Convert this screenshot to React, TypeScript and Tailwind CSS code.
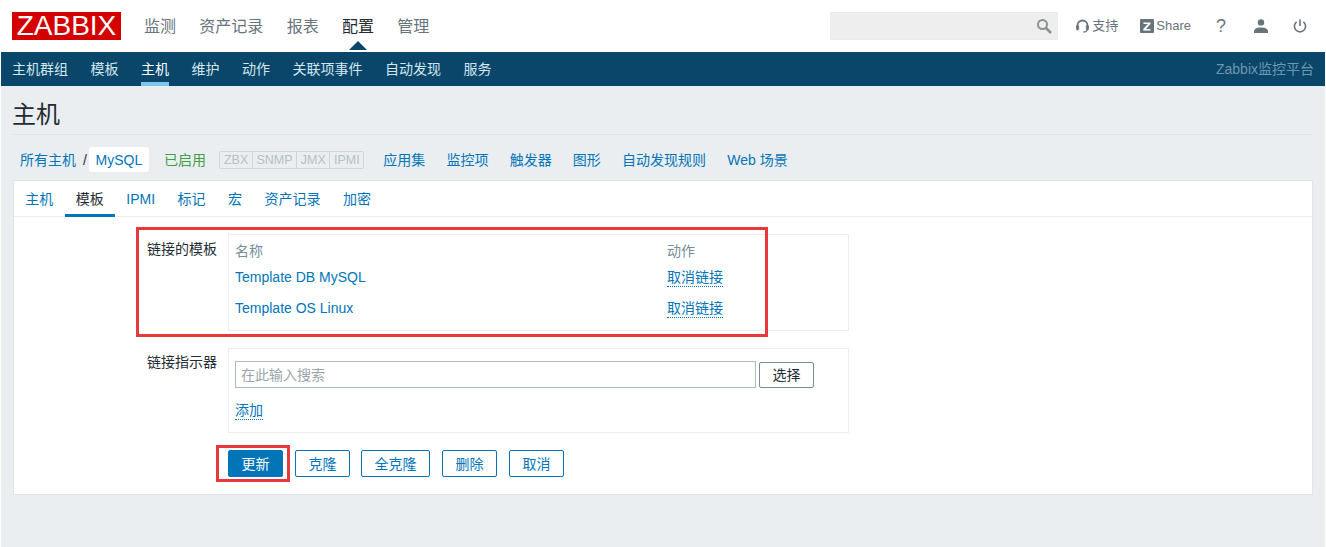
const NAV_MAIN = ["监测", "资产记录", "报表", "配置", "管理"];
const NAV_SUB = ["主机群组", "模板", "主机", "维护", "动作", "关联项事件", "自动发现", "服务"];
const HOST_LINKS = ["应用集", "监控项", "触发器", "图形", "自动发现规则", "Web 场景"];
const TABS = ["主机", "模板", "IPMI", "标记", "宏", "资产记录", "加密"];
const STATUS = ["ZBX", "SNMP", "JMX", "IPMI"];
const TEMPLATES = ["Template DB MySQL", "Template OS Linux"];

function SearchIcon() {
  return (
    <svg width="16" height="16" viewBox="0 0 16 16" fill="none" stroke="#8a9094" strokeWidth="2">
      <circle cx="6.5" cy="6.5" r="4.5" />
      <path d="M10 10l5 5" strokeWidth="2.6" />
    </svg>
  );
}

function HeadsetIcon() {
  return (
    <svg width="13" height="14" viewBox="0 0 13 14" fill="none" stroke="#68747b" strokeWidth="1.8">
      <path d="M1.5 9V6.5a5 5 0 0 1 10 0V9" />
      <rect x="0.3" y="6.5" width="2.4" height="4.5" rx="1" fill="#68747b" strokeWidth="0.6" />
      <rect x="10.3" y="6.5" width="2.4" height="4.5" rx="1" fill="#68747b" strokeWidth="0.6" />
      <path d="M11 10.5c0 1.5-1.5 2.5-3.5 2.5" strokeWidth="1.3" />
    </svg>
  );
}

function ShareIcon() {
  return (
    <svg width="14" height="14" viewBox="0 0 14 14">
      <rect width="14" height="14" rx="1" fill="#68747b" />
      <path d="M3.5 3.5h7v1.6l-4.6 5h4.6v1.4h-7.2v-1.6l4.6-5H3.5z" fill="#fff" />
    </svg>
  );
}

function UserIcon() {
  return (
    <svg width="16" height="14" viewBox="0 0 16 14" fill="#68747b">
      <circle cx="8" cy="3.4" r="3.2" />
      <path d="M1 14v-1.5C1 10 4 8.6 8 8.6s7 1.4 7 3.9V14z" />
    </svg>
  );
}

function PowerIcon() {
  return (
    <svg width="14" height="14" viewBox="0 0 14 14" fill="none" stroke="#68747b" strokeWidth="1.6">
      <path d="M7 0.5v6.5" />
      <path d="M3.6 2.8a5.6 5.6 0 1 0 6.8 0" />
    </svg>
  );
}

function FormButton({ label, primary, wide, gap }: { label: string; primary?: boolean; wide?: boolean; gap?: string }) {
  return (
    <button
      type="button"
      className={`h-[27px] rounded-[2px] border border-[#0275b8] text-sm ${wide ? "w-[69px]" : "w-[55px]"} ${
        primary ? "bg-[#0275b8] text-white" : "bg-white text-[#0275b8]"
      } ${gap ?? ""}`}
    >
      {label}
    </button>
  );
}

export default function App() {
  return (
    <div className="min-h-[547px] bg-white px-px font-['Liberation_Sans','Noto_Sans_CJK_SC',sans-serif] text-sm text-[#1f2c33]">
      <header className="flex h-[52px] items-start pl-[11px] pr-[18px] pt-3">
        <div className="flex h-[28px] w-[109px] items-center justify-center bg-[#d40000] text-[28px] leading-none text-white">
          ZABBIX
        </div>
        <nav className="ml-[23px] flex gap-[23.3px] pt-[3px] text-base leading-6 text-[#68747b]">
          {NAV_MAIN.map((item) => (
            <a key={item} className={item === "配置" ? "relative text-[#1f2c33]" : ""}>
              {item}
              {item === "配置" && (
                <span className="absolute left-[7px] top-[26px] h-0 w-0 border-x-[9px] border-b-[9px] border-x-transparent border-b-[#0a466a]" />
              )}
            </a>
          ))}
        </nav>
        <div className="ml-auto flex items-center">
          <div className="flex h-[28px] w-[228px] items-center justify-end border border-[#ebebeb] bg-[#eeeeee] pr-[5px]">
            <SearchIcon />
          </div>
          <a className="ml-[18px] flex items-center gap-[3px] text-[13px] text-[#68747b]">
            <HeadsetIcon />
            <span>支持</span>
          </a>
          <a className="ml-[22px] flex items-center gap-[2px] text-[13px] text-[#68747b]">
            <ShareIcon />
            <span>Share</span>
          </a>
          <span className="ml-[25px] text-lg leading-6 text-[#68747b]">?</span>
          <span className="ml-[27px]">
            <UserIcon />
          </span>
          <span className="ml-[24px]">
            <PowerIcon />
          </span>
        </div>
      </header>

      <div className="flex h-[34px] items-start justify-between bg-[#0a466a] pl-[11px] pr-[11px]">
        <nav className="flex gap-[22.5px] text-[#d2e6f0]">
          {NAV_SUB.map((item) => (
            <a
              key={item}
              className={`h-[34px] pt-[8px] leading-[18px] ${
                item === "主机" ? "border-b-4 border-[#7fc6ea] text-white" : ""
              }`}
            >
              {item}
            </a>
          ))}
        </nav>
        <span className="pt-[8px] leading-[18px] text-[#6c97b0]">Zabbix监控平台</span>
      </div>

      <main className="bg-[#ebeef0] pb-[52px] pl-[11px] pr-[12px]">
        <h1 className="flex h-[49px] items-center border-b border-[#dfe4e7] pt-[10px] text-2xl font-normal text-[#1f2c33]">
          主机
        </h1>

        <div className="flex h-[45px] items-center pl-[8px] pt-[4px] text-[#0275b8]">
          <a>所有主机</a>
          <span className="ml-[7px] text-[#1f2c33]">/</span>
          <a className="ml-[2px] flex h-[25px] w-[60px] items-center justify-center rounded-[3px] bg-white">MySQL</a>
          <span className="ml-[15px] text-[#429e47]">已启用</span>
          <div className="ml-[13.5px] flex h-[18px] items-center rounded-[2px] border border-[#cfd5d9] text-[12.5px] text-[#b6bfc4]">
            {STATUS.map((item, i) => (
              <span key={item} className={`px-[3.6px] leading-[16px] ${i > 0 ? "border-l border-[#cfd5d9]" : ""}`}>
                {item}
              </span>
            ))}
          </div>
          <div className="ml-[19px] flex gap-[21.2px]">
            {HOST_LINKS.map((item) => (
              <a key={item}>{item}</a>
            ))}
          </div>
        </div>

        <section className="relative ml-px h-[315px] border border-[#dfe4e7] bg-white">
          <div className="flex h-[36px] items-start border-b border-[#ebeef0] text-[#0275b8]">
            {TABS.map((tab) => (
              <a
                key={tab}
                className={`h-[36px] px-[11.25px] pt-[9px] leading-[18px] ${
                  tab === "模板" ? "border-b-[3px] border-[#0275b8] text-[#1f2c33]" : ""
                }`}
              >
                {tab}
              </a>
            ))}
          </div>

          <div className="mt-[17px] flex">
            <label className="w-[203px] pt-[6px] text-right leading-[18px]">链接的模板</label>
            <div className="ml-[11px] h-[97px] w-[621px] border border-[#ebeef0] px-[6px] pt-[6px]">
              <div className="flex h-[20px] items-center text-[#768d99]">
                <span className="w-[432px]">名称</span>
                <span>动作</span>
              </div>
              {TEMPLATES.map((name) => (
                <div key={name} className="flex h-[31px] items-center text-[#0275b8]">
                  <a className="w-[432px]">{name}</a>
                  <a className="mt-[1px] border-b border-dotted border-[#0275b8] leading-[18px]">取消链接</a>
                </div>
              ))}
            </div>
          </div>

          <div className="mt-[17px] flex">
            <label className="w-[203px] pt-[5px] text-right leading-[18px]">链接指示器</label>
            <div className="ml-[11px] h-[85px] w-[621px] border border-[#ebeef0] px-[6px] pt-[12px]">
              <div className="flex items-center">
                <div className="flex h-[27px] w-[521px] items-center border border-[#acbbc2] px-[5px] text-[#9aa5ab]">
                  在此输入搜索
                </div>
                <button
                  type="button"
                  className="ml-[3px] h-[26px] w-[55px] rounded-[2px] border border-[#768d99] text-[#1f2c33]"
                >
                  选择
                </button>
              </div>
              <a className="mt-[13px] inline-block border-b border-dotted border-[#0275b8] leading-[18px] text-[#0275b8]">
                添加
              </a>
            </div>
          </div>

          <div className="mt-[17px] flex pl-[214px]">
            <FormButton label="更新" primary />
            <FormButton label="克隆" gap="ml-[12px]" />
            <FormButton label="全克隆" wide gap="ml-[11px]" />
            <FormButton label="删除" gap="ml-[12px]" />
            <FormButton label="取消" gap="ml-[12px]" />
          </div>

          <div className="pointer-events-none absolute left-[122px] top-[46px] h-[110px] w-[632px] border-[3px] border-[#e8383a]" />
          <div className="pointer-events-none absolute left-[202px] top-[264px] h-[37px] w-[74px] border-[3px] border-[#e8383a]" />
        </section>
      </main>
    </div>
  );
}
